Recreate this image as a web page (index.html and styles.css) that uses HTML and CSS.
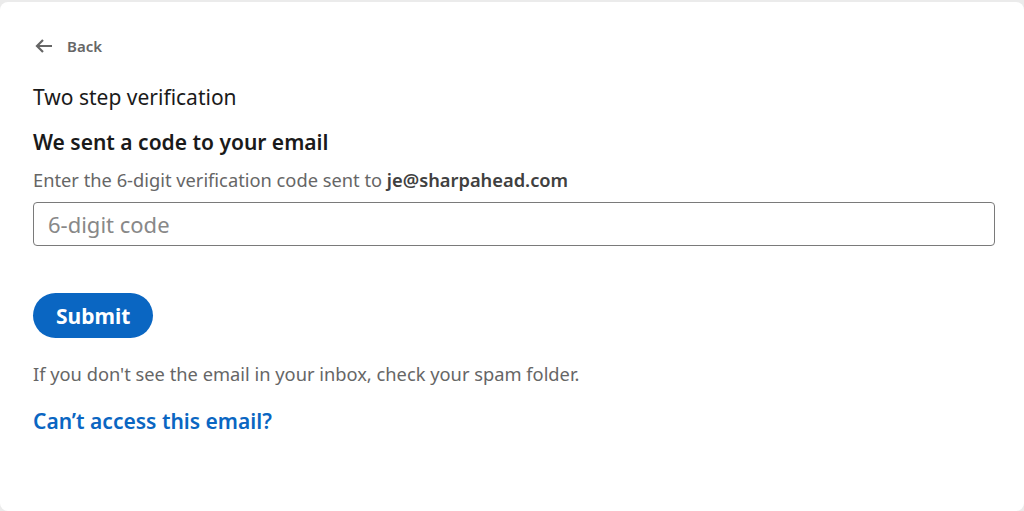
FILE: index.html
```html
<!DOCTYPE html>
<html>
<head lang="en">
<meta charset="UTF-8">
<title>Two step verification</title>
<link rel="stylesheet" href="styles.css">
</head>
<body>
<div class="card">
    <a class="back" href="javascript:;">
        <svg width="18" height="14" viewBox="0 0 18 14"><path d="M8 1 2 7l6 6M2 7h15" fill="none" stroke="#666" stroke-width="2.2"/></svg>
        <span>Back</span>
    </a>
    <h1>Two step verification</h1>
    <h2>We sent a code to your email</h2>
    <p class="hint">Enter the 6-digit verification code sent to <b>je@sharpahead.com</b></p>
    <input class="code" type="text" placeholder="6-digit code"/>
    <button class="submit">Submit</button>
    <p class="note">If you don't see the email in your inbox, check your spam folder.</p>
    <a class="help" href="javascript:;">Can’t access this email?</a>
</div>
</body>
</html>
```
FILE: styles.css
```css
*{margin:0;padding:0;box-sizing:border-box;}
html,body{height:100%;}
body{
	background:#ebebeb;
	font-family:"Noto Sans","Open Sans",sans-serif;
	padding-top:2px;
}
.card{
	background:#fff;
	border-radius:8px;
	height:100%;
	padding:34px 29px 0 33px;
	display:flex;
	flex-direction:column;
	align-items:flex-start;
}
a{text-decoration:none;}
.back{
	display:flex;
	align-items:center;
	gap:14px;
	color:#666;
	font-size:15px;
	font-weight:600;
	margin-left:2px;
}
h1{
	font-size:21px;
	font-weight:400;
	color:#1a1a1a;
	margin-top:27px;
}
h2{
	font-size:21px;
	font-weight:600;
	color:#1a1a1a;
	margin-top:17px;
}
.hint{
	font-size:18.3px;
	color:#666;
	margin-top:11px;
}
.hint b{color:#404040;font-weight:600;}
.code{
	width:100%;
	height:44px;
	margin-top:10px;
	border:1px solid #7a7a7a;
	border-radius:4px;
	padding:0 14px;
	font-family:inherit;
	font-size:22px;
	color:#333;
	outline:none;
}
.code::placeholder{color:#888;}
.submit{
	margin-top:47px;
	height:45px;
	padding:0 23px;
	border:none;
	border-radius:23px;
	background:#0a66c2;
	color:#fff;
	font-family:inherit;
	font-size:21px;
	font-weight:700;
}
.note{
	font-size:18.3px;
	color:#666;
	margin-top:23px;
}
.help{
	font-size:21px;
	font-weight:600;
	color:#0a66c2;
	margin-top:21px;
}
```
